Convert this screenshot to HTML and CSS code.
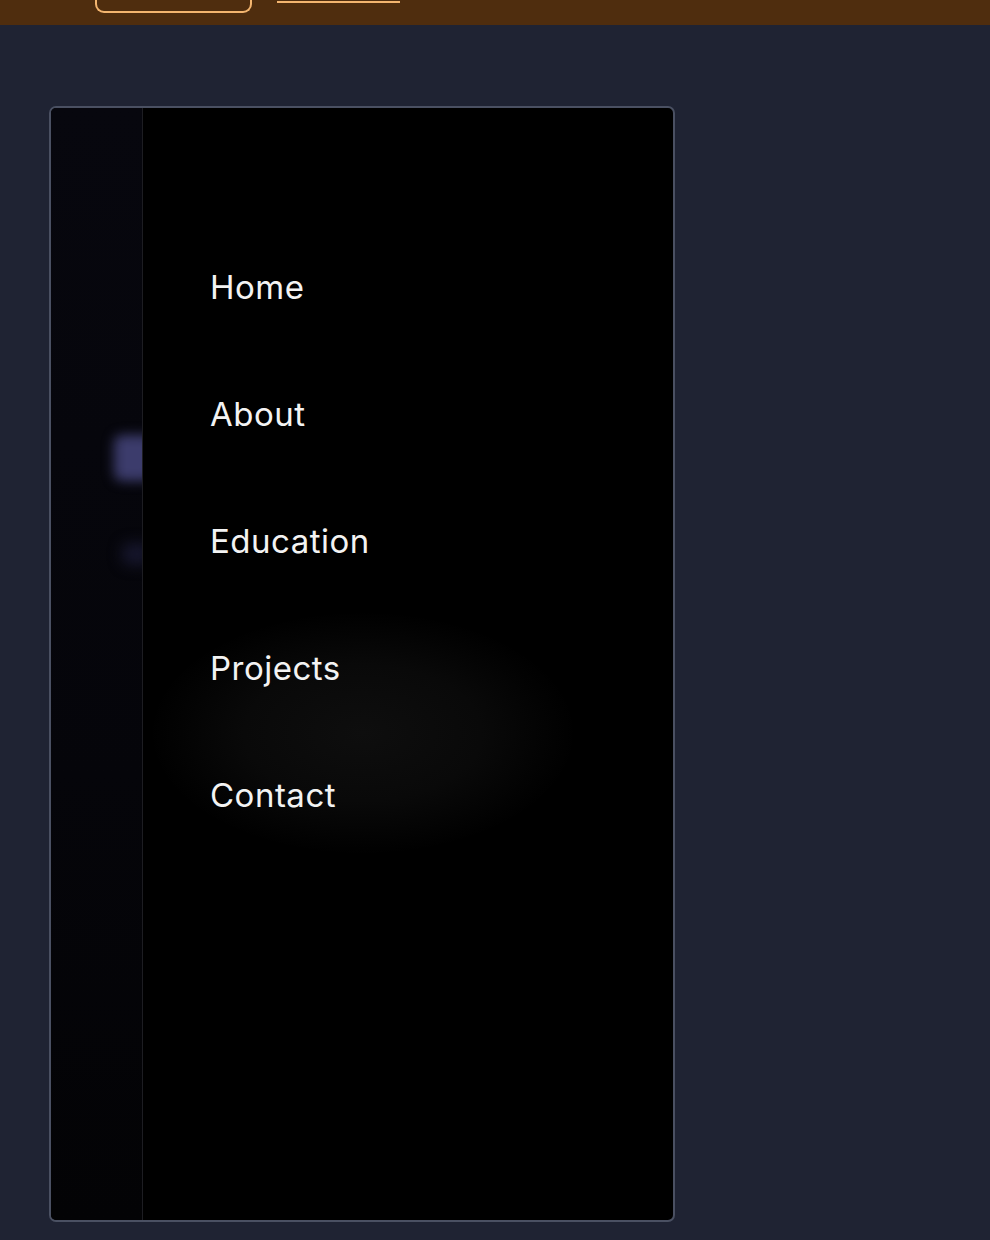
FILE: index.html
```html
<!DOCTYPE html>
<html lang="en">
<head>
<meta charset="utf-8">
<title>Menu</title>
<link rel="stylesheet" href="styles.css">
</head>
<body>
<header class="topbar">
  <span class="topbar-btn"></span>
  <span class="topbar-link"></span>
</header>
<main class="page">
  <div class="menu-card">
    <aside class="rail">
      <span class="glow glow-a"></span>
      <span class="glow glow-b"></span>
    </aside>
    <nav class="menu">
      <span class="menu-glow"></span>
      <a class="menu-item" href="#home">Home</a>
      <a class="menu-item" href="#about">About</a>
      <a class="menu-item" href="#education">Education</a>
      <a class="menu-item" href="#projects">Projects</a>
      <a class="menu-item" href="#contact">Contact</a>
    </nav>
  </div>
</main>
</body>
</html>
```
FILE: styles.css
```css
* { box-sizing: border-box; }
html, body { margin: 0; padding: 0; }
body {
  background: #1f2333;
  font-family: "Inter", "Noto Sans", sans-serif;
  height: 1240px;
  overflow: hidden;
}
.topbar {
  height: 25px;
  background: #4f2d0e;
  display: flex;
  align-items: flex-start;
  padding-left: 95px;
  gap: 25px;
}
.topbar-btn {
  display: block;
  width: 157px;
  height: 14px;
  margin-top: -1px;
  border: 2px solid #f4b56f;
  border-top: none;
  border-radius: 0 0 9px 9px;
}
.topbar-link {
  display: block;
  width: 123px;
  height: 3px;
  border-bottom: 2px solid #f4b56f;
}
.page {
  padding: 81px 0 0 49px;
}
.menu-card {
  width: 626px;
  height: 1116px;
  border: 2px solid #4a5062;
  border-radius: 7px;
  background: #000;
  display: flex;
  overflow: hidden;
}
.rail {
  position: relative;
  width: 92px;
  flex: none;
  background: linear-gradient(180deg, #07070e 0%, #05050a 60%, #030305 100%);
  border-right: 1px solid #1d1d22;
  overflow: hidden;
}
.glow {
  position: absolute;
  border-radius: 8px;
  filter: blur(6px);
}
.glow-a {
  left: 63px;
  top: 327px;
  width: 40px;
  height: 46px;
  background: #3c3c6c;
}
.glow-b {
  left: 71px;
  top: 435px;
  width: 30px;
  height: 22px;
  background: #16162c;
  filter: blur(7px);
}
.menu {
  position: relative;
  flex: 1;
  display: flex;
  flex-direction: column;
  align-items: flex-start;
  padding: 159px 0 0 67px;
  gap: 87px;
}
.menu-glow {
  position: absolute;
  left: 10px;
  top: 505px;
  width: 420px;
  height: 240px;
  border-radius: 50%;
  background: radial-gradient(ellipse at center, #0e0e0e 0%, #090909 40%, rgba(0,0,0,0) 72%);
}
.menu-item {
  position: relative;
  display: block;
  font-size: 33px;
  line-height: 40px;
  font-weight: 400;
  color: #f3f3f3;
  text-decoration: none;
  letter-spacing: 0.5px;
}
```
